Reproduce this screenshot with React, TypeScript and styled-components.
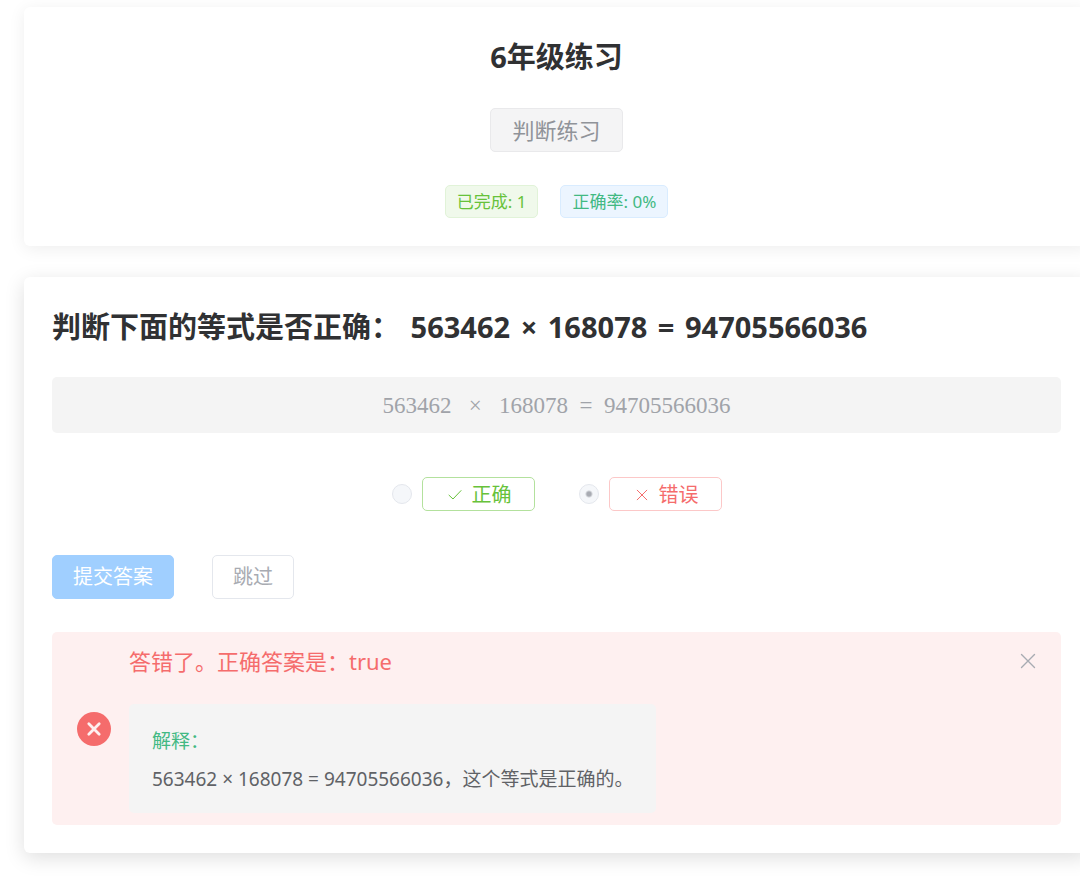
import React from 'react';
import styled, { createGlobalStyle, css } from 'styled-components';

const GlobalStyle = createGlobalStyle`
  * {
    box-sizing: border-box;
  }
  body {
    margin: 0;
    background: #fff;
    color: #303133;
    font-family: 'Noto Sans', 'Noto Sans CJK SC', sans-serif;
    font-size: 20px;
  }
  h1, h2, p {
    margin: 0;
  }
  button, input {
    font-family: inherit;
  }
`;

const Page = styled.main`
  display: flex;
  flex-direction: column;
  gap: 31px;
  padding: 7px 0 23px 24px;
  overflow-x: clip;
`;

const Card = styled.section<{ $raised?: boolean }>`
  display: flex;
  flex-direction: column;
  margin-right: -9px;
  padding: 28px;
  border-radius: 6px;
  background: #fff;
  box-shadow: ${(p) =>
    p.$raised ? '0 5px 20px rgba(0, 0, 0, 0.13)' : '0 3px 17px rgba(0, 0, 0, 0.07)'};
`;

const HeaderCard = styled(Card)`
  align-items: center;
`;

const Title = styled.h1`
  font-size: 29px;
  line-height: 44px;
  font-weight: 700;
`;

const Question = styled.h2`
  font-size: 29px;
  line-height: 44px;
  font-weight: 700;
`;

const Equation = styled.span`
  margin-left: 3px;
`;

const Operator = styled.span`
  margin: 0 3px;
`;

const ModeTag = styled.span`
  margin: 29px 0 33px;
  padding: 0 21px;
  border: 1px solid #e9e9eb;
  border-radius: 5px;
  background: #f4f4f5;
  color: #909399;
  font-size: 22px;
  line-height: 42px;
`;

const Stats = styled.div`
  display: flex;
  gap: 22px;
`;

const Stat = styled.span<{ $kind: 'success' | 'primary' }>`
  padding: 0 11px;
  border: 1px solid;
  border-radius: 5px;
  font-size: 17px;
  line-height: 31px;
  ${(p) =>
    p.$kind === 'success'
      ? css`
          color: #67c23a;
          background: #f0f9eb;
          border-color: #e1f3d8;
        `
      : css`
          color: #42b983;
          background: #ecf5ff;
          border-color: #d9ecff;
        `}
`;

const Expression = styled.input`
  width: 100%;
  height: 56px;
  margin-top: 28px;
  padding: 2px 20px 0;
  border: 0;
  border-radius: 5px;
  background: #f4f4f4;
  color: #a0a3a9;
  font-family: 'Liberation Serif', serif;
  font-size: 23px;
  text-align: center;
`;

const Choices = styled.div`
  display: flex;
  justify-content: center;
  gap: 44px;
  margin: 44px 0;
`;

const Choice = styled.label`
  display: flex;
  align-items: center;
  gap: 10px;
`;

const Radio = styled.input`
  appearance: none;
  width: 20px;
  height: 20px;
  margin: 0;
  border: 1px solid #e4e7ed;
  border-radius: 50%;
  background: #f5f7fa;
  &:checked {
    background: radial-gradient(circle, #a8abb2 0 2px, #f5f7fa 4px);
  }
`;

const ChoiceTag = styled.span<{ $kind: 'success' | 'danger' }>`
  display: flex;
  align-items: center;
  gap: 9px;
  height: 34px;
  padding: 2px 22px 0 24px;
  border: 1px solid ${(p) => (p.$kind === 'success' ? '#b3e19d' : '#fcc8c8')};
  border-radius: 5px;
  color: ${(p) => (p.$kind === 'success' ? '#67c23a' : '#f56c6c')};
  line-height: 32px;
`;

const Actions = styled.div`
  display: flex;
  gap: 38px;
`;

const Button = styled.button<{ $primary?: boolean }>`
  height: 44px;
  padding: 0 20px;
  border: 1px solid ${(p) => (p.$primary ? '#a0cfff' : '#e4e7ed')};
  border-radius: 5px;
  background: ${(p) => (p.$primary ? '#a0cfff' : '#fff')};
  color: ${(p) => (p.$primary ? '#fff' : '#a8abb2')};
  font-size: 20px;
  line-height: 42px;
`;

const Alert = styled.div`
  display: flex;
  align-items: center;
  gap: 18px;
  margin-top: 33px;
  padding: 12px 24px 12px 25px;
  border-radius: 5px;
  background: #fef0f0;
`;

const AlertBody = styled.div`
  flex: 1;
`;

const AlertHead = styled.div`
  display: flex;
  align-items: center;
  justify-content: space-between;
  color: #f56c6c;
  font-size: 22px;
  line-height: 34px;
`;

const CloseButton = styled.button`
  display: flex;
  padding: 0;
  border: 0;
  background: none;
  color: #a8abb2;
`;

const Explanation = styled.div`
  width: fit-content;
  margin-top: 26px;
  padding: 18px 23px 15px;
  border-radius: 5px;
  background: #f4f4f4;
  color: #606266;
  font-size: 19px;
  line-height: 38px;
`;

const ExplanationTitle = styled.p`
  color: #42b983;
`;

const CloseIcon = () => (
  <svg width="18" height="18" viewBox="0 0 18 18" fill="none" stroke="currentColor" strokeWidth="1.4" strokeLinecap="round" aria-hidden="true">
    <path d="M2.5 2.5 15.5 15.5M15.5 2.5 2.5 15.5" />
  </svg>
);

const Cross = () => (
  <svg width="16" height="16" viewBox="0 0 16 16" fill="none" stroke="currentColor" strokeLinecap="round" aria-hidden="true">
    <path d="M3.2 3.2 12.8 12.8M12.8 3.2 3.2 12.8" />
  </svg>
);

const Check = () => (
  <svg width="16" height="16" viewBox="0 0 16 16" fill="none" stroke="currentColor" strokeLinecap="round" aria-hidden="true">
    <path d="M2 8.2 6 12 14 3.6" />
  </svg>
);

const ErrorIcon = () => (
  <svg width="34" height="34" viewBox="0 0 34 34" aria-hidden="true">
    <circle cx="17" cy="17" r="17" fill="#f56c6c" />
    <path d="M11.8 11.8 22.2 22.2M22.2 11.8 11.8 22.2" stroke="#fef0f0" strokeWidth="2.8" strokeLinecap="round" />
  </svg>
);

export default function App() {
  return (
    <>
      <GlobalStyle />
      <Page>
        <HeaderCard>
          <Title>6年级练习</Title>
          <ModeTag>判断练习</ModeTag>
          <Stats>
            <Stat $kind="success">已完成: 1</Stat>
            <Stat $kind="primary">正确率: 0%</Stat>
          </Stats>
        </HeaderCard>
        <Card $raised>
          <Question>
            判断下面的等式是否正确：{' '}
            <Equation>
              563462 <Operator>×</Operator> 168078 <Operator>=</Operator> 94705566036
            </Equation>
          </Question>
          <Expression aria-label="等式" disabled value="563462   ×   168078  =  94705566036" />
          <Choices role="radiogroup" aria-label="判断">
            <Choice>
              <Radio type="radio" name="answer" value="true" disabled />
              <ChoiceTag $kind="success">
                <Check />
                正确
              </ChoiceTag>
            </Choice>
            <Choice>
              <Radio type="radio" name="answer" value="false" disabled defaultChecked />
              <ChoiceTag $kind="danger">
                <Cross />
                错误
              </ChoiceTag>
            </Choice>
          </Choices>
          <Actions>
            <Button $primary disabled>提交答案</Button>
            <Button disabled>跳过</Button>
          </Actions>
          <Alert role="alert">
            <ErrorIcon />
            <AlertBody>
              <AlertHead>
                答错了。正确答案是：true
                <CloseButton aria-label="关闭">
                  <CloseIcon />
                </CloseButton>
              </AlertHead>
              <Explanation>
                <ExplanationTitle>解释：</ExplanationTitle>
                <p>563462 × 168078 = 94705566036，这个等式是正确的。</p>
              </Explanation>
            </AlertBody>
          </Alert>
        </Card>
      </Page>
    </>
  );
}
